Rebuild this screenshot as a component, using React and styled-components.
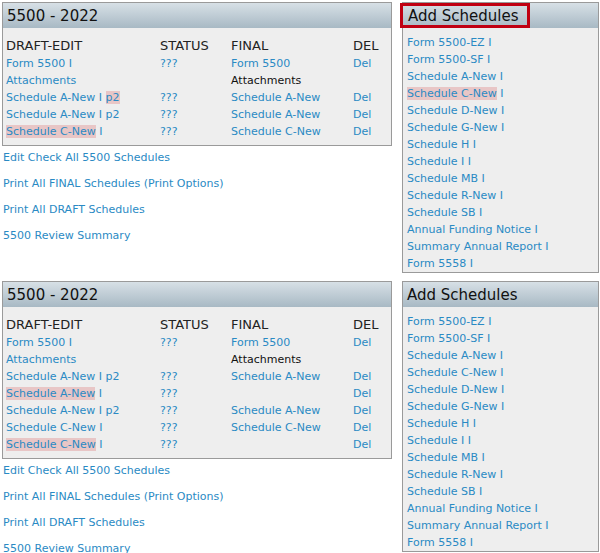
import React from "react";
import styled, { createGlobalStyle } from "styled-components";

const Global = createGlobalStyle`
  html, body { margin: 0; padding: 0; background: #fff; }
  body { padding: 2px; font-family: "DejaVu Sans", Verdana, sans-serif; font-size: 11px; }
`;

const Page = styled.div`
  display: flex;
  flex-direction: column;
  gap: 8px;
  width: 597px;
`;

const Row = styled.div`
  display: grid;
  grid-template-columns: 390px 197px;
  column-gap: 10px;
  align-items: start;
`;

const Panel = styled.div`
  border: 1px solid #9a9a9a;
  background: #eeeeee;
`;

const Header = styled.div`
  height: 25px;
  background: linear-gradient(#d7e0e6, #a8b9c4);
  display: flex;
  align-items: center;
  padding-left: 4px;
  font-size: 15px;
  color: #111;
`;

const Boxed = styled.span`
  margin-left: -7px;
  padding: 0 8px 0 5px;
  height: 25px;
  box-sizing: border-box;
  display: flex;
  align-items: center;
  border: 3px solid #c00012;
`;

const Table = styled.div`
  display: grid;
  grid-template-columns: 154px 71px 122px auto;
  padding: 9px 3px 5px 3px;
  line-height: 17px;
`;

const ColHead = styled.div`
  font-size: 13px;
  color: #222;
  padding-bottom: 1px;
`;

const Cell = styled.div`
  color: ${(p) => (p.$plain ? "#111" : "#2a8ac4")};
  white-space: nowrap;
`;

const Mark = styled.span`
  background: #e8c6c6;
`;

const List = styled.div`
  display: flex;
  flex-direction: column;
  padding: 6px 4px 0 4px;
  line-height: 17px;
`;

const Item = styled.div`
  color: #2a8ac4;
`;

const Links = styled.div`
  display: flex;
  flex-direction: column;
  gap: 9px;
  padding: 3px 0 0 1px;
  line-height: 17px;
`;

const Link = styled.div`
  color: #2a8ac4;
`;

const cols = ["DRAFT-EDIT", "STATUS", "FINAL", "DEL"];

function M({ children }) {
  return <Mark>{children}</Mark>;
}

const table1 = [
  ["Form 5500 I", "???", "Form 5500", "Del"],
  ["Attachments", "", { plain: "Attachments" }, ""],
  [<>Schedule A-New I <M>p2</M></>, "???", "Schedule A-New", "Del"],
  ["Schedule A-New I p2", "???", "Schedule A-New", "Del"],
  [<><M>Schedule C-New</M> I</>, "???", "Schedule C-New", "Del"],
];

const table2 = [
  ["Form 5500 I", "???", "Form 5500", "Del"],
  ["Attachments", "", { plain: "Attachments" }, ""],
  ["Schedule A-New I p2", "???", "Schedule A-New", "Del"],
  [<><M>Schedule A-New</M> I</>, "???", "", "Del"],
  ["Schedule A-New I p2", "???", "Schedule A-New", "Del"],
  ["Schedule C-New I", "???", "Schedule C-New", "Del"],
  [<><M>Schedule C-New</M> I</>, "???", "", "Del"],
];

const schedules = (markC) => [
  "Form 5500-EZ I",
  "Form 5500-SF I",
  "Schedule A-New I",
  markC ? <><M>Schedule C-New</M> I</> : "Schedule C-New I",
  "Schedule D-New I",
  "Schedule G-New I",
  "Schedule H I",
  "Schedule I I",
  "Schedule MB I",
  "Schedule R-New I",
  "Schedule SB I",
  "Annual Funding Notice I",
  "Summary Annual Report I",
  "Form 5558 I",
];

const actions = [
  "Edit Check All 5500 Schedules",
  "Print All FINAL Schedules (Print Options)",
  "Print All DRAFT Schedules",
  "5500 Review Summary",
];

function FormPanel({ rows }) {
  return (
    <Panel>
      <Header>5500 - 2022</Header>
      <Table>
        {cols.map((c) => (
          <ColHead key={c}>{c}</ColHead>
        ))}
        {rows.map((r, i) =>
          r.map((c, j) =>
            c && typeof c === "object" && "plain" in c ? (
              <Cell key={i + "-" + j} $plain>{c.plain}</Cell>
            ) : (
              <Cell key={i + "-" + j}>{c}</Cell>
            )
          )
        )}
      </Table>
    </Panel>
  );
}

function AddPanel({ boxed, markC }) {
  return (
    <Panel>
      <Header>{boxed ? <Boxed>Add Schedules</Boxed> : "Add Schedules"}</Header>
      <List>
        {schedules(markC).map((s, i) => (
          <Item key={i}>{s}</Item>
        ))}
      </List>
    </Panel>
  );
}

function Section({ rows, boxed, markC }) {
  return (
    <Row>
      <div>
        <FormPanel rows={rows} />
        <Links>
          {actions.map((a) => (
            <Link key={a}>{a}</Link>
          ))}
        </Links>
      </div>
      <AddPanel boxed={boxed} markC={markC} />
    </Row>
  );
}

export default function App() {
  return (
    <>
      <Global />
      <Page>
        <Section rows={table1} boxed markC />
        <Section rows={table2} />
      </Page>
    </>
  );
}
